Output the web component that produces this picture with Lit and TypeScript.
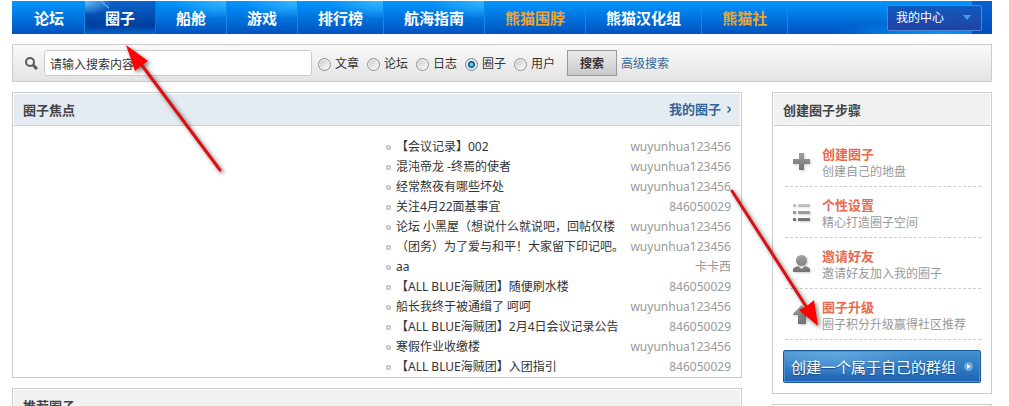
import { LitElement, html, css, svg } from "lit";
import { customElement } from "lit/decorators.js";
import { classMap } from "lit/directives/class-map.js";

const NAV = [
  { text: "论坛" },
  { text: "圈子", active: true },
  { text: "船舱" },
  { text: "游戏" },
  { text: "排行榜" },
  { text: "航海指南" },
  { text: "熊猫围脖", hot: true },
  { text: "熊猫汉化组" },
  { text: "熊猫社", hot: true },
];

const SCOPES = ["文章", "论坛", "日志", "圈子", "用户"];

const TOPICS: [string, string][] = [
  ["【会议记录】002", "wuyunhua123456"],
  ["混沌帝龙 -终焉的使者", "wuyunhua123456"],
  ["经常熬夜有哪些坏处", "wuyunhua123456"],
  ["关注4月22面基事宜", "846050029"],
  ["论坛 小黑屋（想说什么就说吧，回帖仅楼", "wuyunhua123456"],
  ["（团务）为了爱与和平！大家留下印记吧。", "wuyunhua123456"],
  ["aa", "卡卡西"],
  ["【ALL BLUE海贼团】随便刷水楼", "846050029"],
  ["船长我终于被通缉了 呵呵", "wuyunhua123456"],
  ["【ALL BLUE海贼团】2月4日会议记录公告", "846050029"],
  ["寒假作业收缴楼", "wuyunhua123456"],
  ["【ALL BLUE海贼团】入团指引", "846050029"],
];

const STEPS = [
  { title: "创建圈子", note: "创建自己的地盘", icon: svg`<path d="M7 1h5v6h6v5h-6v6H7v-6H1V7h6z"/>` },
  {
    title: "个性设置",
    note: "精心打造圈子空间",
    icon: svg`<path d="M1 1h3v3H1zM6 1h12v3H6z" opacity=".55"/><path d="M1 8h3v3H1zM6 8h12v3H6z" opacity=".8"/><path d="M1 15h3v3H1zM6 15h12v3H6z"/>`,
  },
  {
    title: "邀请好友",
    note: "邀请好友加入我的圈子",
    icon: svg`<circle cx="9.500" cy="6.500" r="5.500"/><path d="M1 18v-3q1-2 5-3l3.500 3 3.500-3q4 1 5 3v3z"/>`,
  },
  { title: "圈子升级", note: "圈子积分升级赢得社区推荐", icon: svg`<path d="M9.500 0l9 9v1H14v9H6v-9H1V9z"/>` },
];

@customElement("app-root")
export class AppRoot extends LitElement {
  static styles = css`
    :host {
      display: block;
      position: relative;
      max-height: 100vh;
      overflow: hidden;
      background: #fff;
      color: #333;
      font: 12px/20px "Noto Sans", "Noto Sans CJK SC", sans-serif;
    }
    * { box-sizing: border-box; }
    a { color: inherit; text-decoration: none; }
    h2, h3, p, ul, ol { margin: 0; padding: 0; }
    ul, ol { list-style: none; }
    button, input { font: inherit; color: inherit; margin: 0; }
    .page { padding: 1px 17px 0 12px; }

    .nav {
      display: flex;
      align-items: center;
      height: 33px;
      padding-right: 10px;
      background:
        linear-gradient(#0a5fd0, #0050bb) right / 20px 100% no-repeat,
        radial-gradient(ellipse 110px 14px at calc(100% - 50px) 100%, #0a98ff, transparent),
        linear-gradient(#0096ff, #0052bd);
    }
    .menu { display: flex; flex: 1; height: 100%; padding-left: 2px; }
    .tab {
      display: block;
      height: 100%;
      padding: 0 20px;
      border-right: 1px solid #1688e4;
      color: #fff;
      font-size: 15px;
      font-weight: 700;
      line-height: 34px;
      white-space: nowrap;
      background: radial-gradient(ellipse 55px 18px at 100% 0, #35b6ff, transparent);
    }
    .tab.plain { background: none; }
    .tab.hot { color: #f0a52c; background: none; }
    .tab.active {
      border-color: #0876e0;
      background:
        linear-gradient(40deg, transparent 74%, #4fb2f5 80%, transparent 84%) 0 0 / 24px 14px no-repeat,
        radial-gradient(ellipse 28px 14px at 0 0, #67bff8, transparent),
        linear-gradient(#0b63ca, #003f9e 75%, #0663cd);
    }
    .center {
      display: flex;
      align-items: center;
      justify-content: space-between;
      width: 95px;
      height: 26px;
      padding: 0 10px 0 8px;
      border: 1px solid #4b87d6;
      border-radius: 2px;
      background: linear-gradient(#0d5bbd, #2442a5);
      color: #fff;
    }
    .caret { width: 8px; height: 5px; fill: #4c9bea; }

    .search {
      display: flex;
      align-items: center;
      height: 38px;
      margin-top: 10px;
      padding-left: 12px;
      border: 1px solid #ccc;
      background: linear-gradient(#fafafa, #e3e3e3);
    }
    .lens { width: 13px; height: 13px; margin-right: 6px; fill: none; stroke: #5b5b5b; stroke-width: 2; }
    .query {
      width: 268px;
      height: 26px;
      margin-right: 6px;
      padding: 1px 5px 0;
      border: 1px solid #ccc;
      border-radius: 3px;
      background: #fff;
      outline: none;
    }
    .scopes { display: flex; gap: 8px; margin: 0; padding: 0; border: 0; }
    .scope { display: flex; align-items: center; gap: 4px; line-height: 24px; padding-top: 2px; }
    .radio {
      appearance: none;
      width: 13px;
      height: 13px;
      border: 1px solid #909090;
      border-radius: 50%;
      background: linear-gradient(135deg, #c4c8cb, #fff);
      box-shadow: inset 0 0 0 1px #f4f4f4;
    }
    .radio:checked {
      border-color: #70889a;
      background: radial-gradient(circle, #5fd0f4 0 1px, #0c4774 3px, #e4eaee 4px);
      box-shadow: none;
    }
    .go {
      height: 26px;
      margin: 0 4px 0 12px;
      padding: 1px 12px 0;
      border: 1px solid #999;
      background: linear-gradient(#ebebeb, #c9c9c9);
      font-weight: 700;
      line-height: 24px;
    }
    .blue { padding-top: 2px; color: #336699; }

    .columns { display: flex; align-items: flex-start; gap: 30px; margin-top: 10px; }
    .main { flex: 1; min-width: 0; }
    .side { width: 220px; }
    .panel { margin-bottom: 10px; border: 1px solid #ccc; }
    .head {
      display: flex;
      justify-content: space-between;
      height: 33px;
      padding: 0 9px;
      border: 1px solid #fff;
      border-bottom-color: #c8d2da;
      background: #f1f1f1;
      font-size: 13px;
      font-weight: 700;
      line-height: 33px;
      color: #444;
    }
    .head.tint { background: #e4ebf1; }
    .heading { font-size: 13px; line-height: 33px; }
    .more { display: flex; align-items: center; gap: 6px; color: #336699; }
    .chevron { width: 4px; height: 7px; fill: none; stroke: #336699; stroke-width: 1.500; }

    .topics { width: 355px; max-width: 100%; margin-left: auto; padding: 11px 10px 0 0; }
    .topic { display: flex; align-items: center; height: 20px; white-space: nowrap; }
    .dot { width: 5px; height: 5px; margin-right: 5px; border: 1px solid #aaa; border-radius: 50%; background: #e2e2e2; }
    .subject { flex: 1; }
    .author { color: #999; }

    .body { padding: 10px; }
    .step {
      display: flex;
      align-items: center;
      gap: 11px;
      height: 51px;
      margin-left: 2px;
      padding-left: 7px;
      border-bottom: 1px dashed #ccc;
    }
    .icon { width: 19px; height: 19px; filter: drop-shadow(1px 1px 1px #ccc); fill: url(#metal); }
    .words { padding-top: 3px; }
    .title { color: #e8694d; font-size: 13px; line-height: 18px; }
    .note { color: #999; line-height: 18px; }
    .create {
      display: flex;
      align-items: center;
      justify-content: space-between;
      width: 100%;
      height: 33px;
      margin-top: 10px;
      padding: 0 7px;
      border: 1px solid #1c599c;
      border-radius: 2px;
      background:
        radial-gradient(ellipse 90px 24px at 25% 0, #62aadf, transparent),
        linear-gradient(#438fce, #2164b5);
      box-shadow: inset 0 0 0 1px #4b91d3;
      color: #fff;
      font-size: 15px;
      text-shadow: 0 1px 1px #164a85;
      white-space: nowrap;
    }
    .badge { width: 9px; height: 9px; }
    .marks { position: absolute; left: 0; top: 0; width: 850px; height: 350px; pointer-events: none; }
    .shade { filter: drop-shadow(2px 2px 2px #0008); }
  `;

  render() {
    return html`
      <div class="page">
        <nav class="nav">
          <div class="menu">
            ${NAV.map(
              (n, i) => html`<a href="#" class=${classMap({ tab: true, active: !!n.active, hot: !!n.hot, plain: i === 0 || i > 5 })}>${n.text}</a>`
            )}
          </div>
          <button class="center">我的中心<svg class="caret" viewBox="0 0 8 5"><path d="M0 0h8L4 5z" /></svg></button>
        </nav>

        <form class="search" @submit=${(e: Event) => e.preventDefault()}>
          <svg class="lens" viewBox="0 0 13 13"><circle cx="5" cy="5" r="4" /><path d="M8 8l4 4" stroke-width="3" /></svg>
          <input class="query" type="text" aria-label="搜索" value="请输入搜索内容" />
          <fieldset class="scopes">
            ${SCOPES.map(
              (s) => html`<label class="scope"><input class="radio" type="radio" name="scope" ?checked=${s === "圈子"} />${s}</label>`
            )}
          </fieldset>
          <button class="go">搜索</button>
          <a href="#" class="blue">高级搜索</a>
        </form>

        <div class="columns">
          <main class="main">
            <section class="panel">
              <header class="head tint">
                <h2 class="heading">圈子焦点</h2>
                <a href="#" class="more">我的圈子<svg class="chevron" viewBox="0 0 4 7"><path d="M.5.500l3 3-3 3" /></svg></a>
              </header>
              <ul class="topics">
                ${TOPICS.map(
                  ([subject, author]) => html`<li class="topic">
                    <span class="dot"></span><a href="#" class="subject">${subject}</a><a href="#" class="author">${author}</a>
                  </li>`
                )}
              </ul>
            </section>
            <section class="panel">
              <header class="head"><h2 class="heading">推荐圈子</h2></header>
            </section>
          </main>

          <aside class="side">
            <section class="panel">
              <header class="head"><h2 class="heading">创建圈子步骤</h2></header>
              <div class="body">
                <ol>
                  ${STEPS.map(
                    (s) => html`<li class="step">
                      <svg class="icon" viewBox="0 0 19 19">
                        <defs>
                          <linearGradient id="metal" gradientUnits="userSpaceOnUse" x1="0" y1="0" x2="0" y2="19">
                            <stop offset="0" stop-color="#a2a2a2" /><stop offset="1" stop-color="#707070" />
                          </linearGradient>
                        </defs>
                        ${s.icon}
                      </svg>
                      <div class="words">
                        <h3 class="title">${s.title}</h3>
                        <p class="note">${s.note}</p>
                      </div>
                    </li>`
                  )}
                </ol>
                <button class="create">
                  创建一个属于自己的群组
                  <svg class="badge" viewBox="0 0 9 9"><circle cx="4.500" cy="4.500" r="4.500" fill="#69a9e0" /><path d="M3 2l4 2.500L3 7z" fill="#fff" /></svg>
                </button>
              </div>
            </section>
            <section class="panel">
              <header class="head"></header>
            </section>
          </aside>
        </div>
      </div>

      <svg class="marks" viewBox="0 0 850 350" aria-hidden="true">
        <g class="shade" fill="#f00">
          <path d="M220 170L138 60" stroke="#dc1010" stroke-width="3" stroke-linecap="round" />
          <path d="M126 45l22 16-6 4-7 6z" />
          <path d="M732 191l77 120" stroke="#dc1010" stroke-width="3" stroke-linecap="round" />
          <path d="M818 326l-19-16 8-4 7-6z" />
        </g>
      </svg>
    `;
  }
}
